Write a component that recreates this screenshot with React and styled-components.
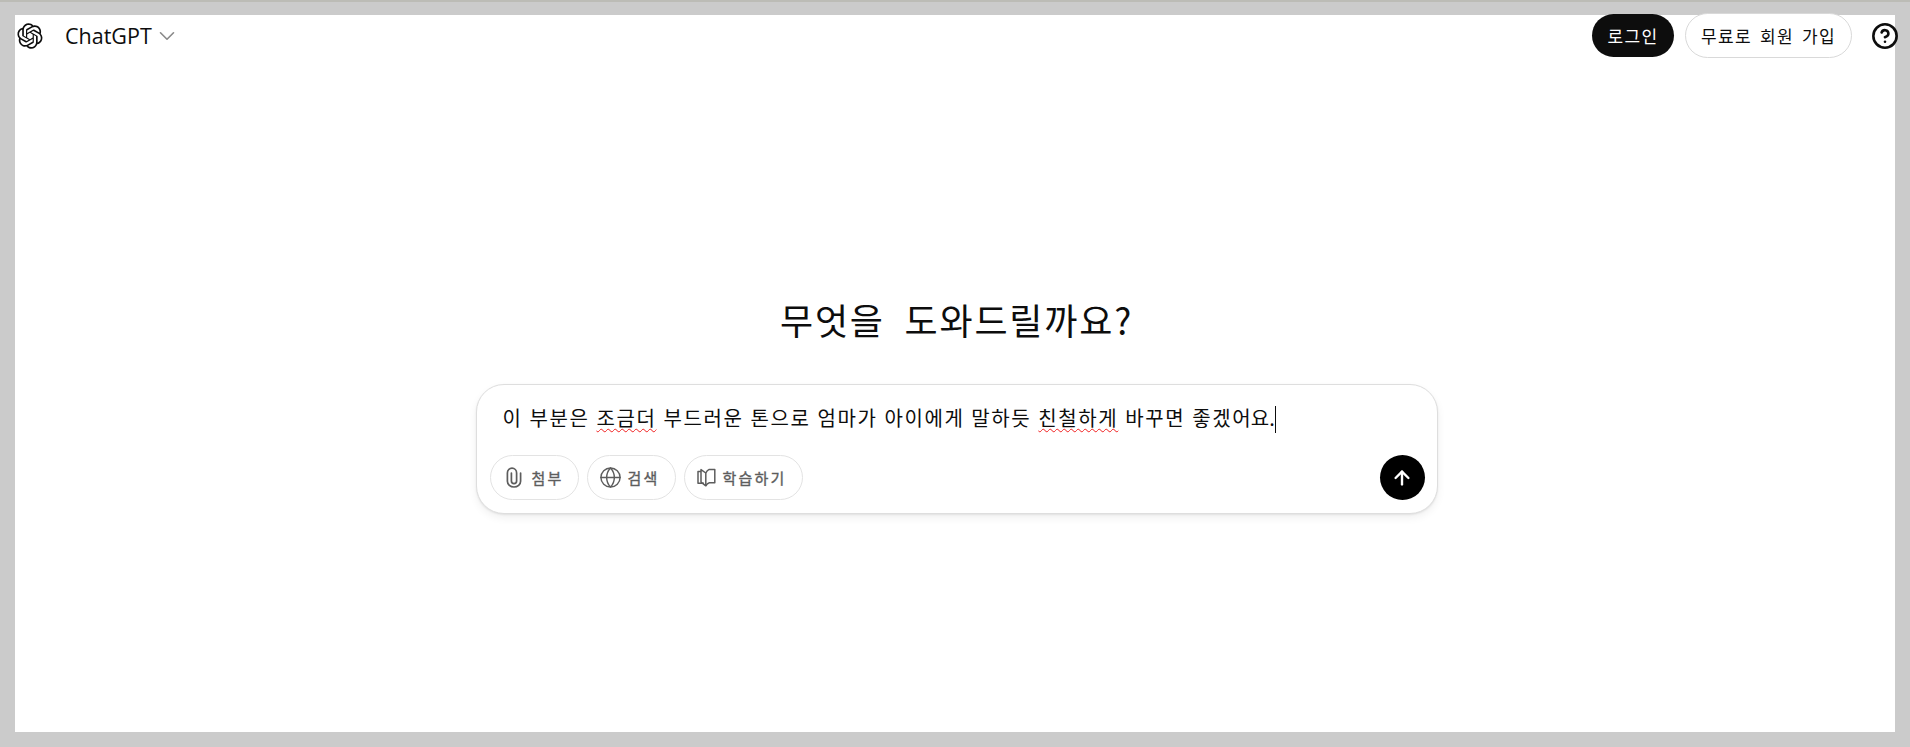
import React from "react";
import styled, { createGlobalStyle } from "styled-components";
import { ChevronDown, CircleHelp, Globe, ArrowUp } from "lucide-react";

const FONT = `"Noto Sans CJK KR", "Noto Sans", sans-serif`;

const GlobalStyle = createGlobalStyle`
  html, body {
    margin: 0;
    height: 100%;
    background: #cbcbcb;
  }
  #root {
    height: 100%;
  }
`;

const Page = styled.div`
  box-sizing: border-box;
  height: 747px;
  padding: 13px 15px 15px;
  border-top: 2px solid #bcbcb6;
  font-family: ${FONT};
  color: #0d0d0d;
`;

const Panel = styled.div`
  height: 100%;
  background: #fff;
  display: flex;
  flex-direction: column;
`;

const Header = styled.header`
  display: flex;
  align-items: center;
  height: 45px;
  margin: -2px -4px 0 2px;
`;

const ModelName = styled.span`
  margin-left: 22px;
  font-family: "Open Sans", sans-serif;
  font-size: 21.5px;
  color: #0d0d0d;
`;

const Chevron = styled(ChevronDown)`
  margin-left: 2px;
`;

const Actions = styled.div`
  margin-left: auto;
  display: flex;
  align-items: center;
`;

const AuthButton = styled.button`
  box-sizing: border-box;
  height: ${(p) => (p.$primary ? "43px" : "45px")};
  width: ${(p) => (p.$primary ? "82px" : "167px")};
  margin-right: ${(p) => (p.$primary ? "11px" : "19px")};
  padding: 0;
  border-radius: 23px;
  border: ${(p) => (p.$primary ? "none" : "1px solid #d9d9d9")};
  background: ${(p) => (p.$primary ? "#0d0d0d" : "#fff")};
  color: ${(p) => (p.$primary ? "#fff" : "#0d0d0d")};
  font-family: ${FONT};
  font-size: 17px;
  letter-spacing: 1.3px;
  word-spacing: 3px;
`;

const Main = styled.main`
  display: flex;
  flex-direction: column;
  align-items: center;
  padding: 239px 0 0 3px;
`;

const Title = styled.h1`
  margin: 0 0 43px;
  font-size: 36px;
  line-height: 44px;
  font-weight: 400;
  letter-spacing: 1.8px;
  word-spacing: 10px;
  color: #0d0d0d;
  white-space: nowrap;
`;

const Composer = styled.div`
  box-sizing: border-box;
  width: 962px;
  height: 130px;
  border: 1px solid #dedede;
  border-radius: 28px;
  background: #fff;
  box-shadow: 0 1px 2px rgba(0, 0, 0, 0.08), 0 4px 8px rgba(0, 0, 0, 0.06);
  padding: 16px 12px 13px 13px;
  display: flex;
  flex-direction: column;
  justify-content: space-between;
`;

const Prompt = styled.div`
  padding-left: 13px;
  font-size: 20px;
  line-height: 34px;
  letter-spacing: 1.6px;
  word-spacing: 0.9px;
  color: #0d0d0d;
  white-space: nowrap;
`;

const Misspelled = styled.span`
  text-decoration: underline wavy #f01f1f 1.3px;
  text-underline-offset: 2px;
`;

const Tight = styled.span`
  letter-spacing: 0;
`;

const Caret = styled.span`
  display: inline-block;
  width: 1px;
  height: 27px;
  background: #0d0d0d;
  vertical-align: -7px;
`;

const Toolbar = styled.div`
  display: flex;
  align-items: center;
  gap: 8px;
`;

const Chip = styled.button`
  box-sizing: border-box;
  height: 45px;
  width: ${(p) => p.$width}px;
  padding: 0 0 0 ${(p) => p.$pad}px;
  display: flex;
  align-items: center;
  gap: ${(p) => p.$gap}px;
  border: 1px solid #e3e3e3;
  border-radius: 23px;
  background: #fff;
  color: #5d5d5d;
  font-family: ${FONT};
  font-size: 15px;
  letter-spacing: 2.2px;
  -webkit-text-stroke: 0.35px #5d5d5d;
`;

const SendButton = styled.button`
  width: 45px;
  height: 45px;
  margin-left: auto;
  padding: 0;
  border: none;
  border-radius: 50%;
  background: #000;
  color: #fff;
  display: flex;
  align-items: center;
  justify-content: center;
`;

const Logo = () => (
  <svg width="26" height="26" viewBox="0 0 41 41" fill="#0d0d0d">
    <path d="M37.5324 16.8707C37.9808 15.5241 38.1363 14.0974 37.9886 12.6859C37.8409 11.2744 37.3934 9.91076 36.676 8.68622C35.6126 6.83404 33.9882 5.3676 32.0373 4.4985C30.0864 3.62941 27.9098 3.40259 25.8215 3.85078C24.8796 2.7893 23.7219 1.94125 22.4257 1.36341C21.1295 0.785575 19.7249 0.491269 18.3058 0.500197C16.1708 0.495044 14.0893 1.16803 12.3614 2.42214C10.6335 3.67624 9.34853 5.44666 8.6917 7.47815C7.30085 7.76286 5.98686 8.3414 4.8377 9.17505C3.68854 10.0087 2.73073 11.0782 2.02839 12.312C0.956464 14.1591 0.498905 16.2988 0.721698 18.4228C0.944492 20.5467 1.83612 22.5449 3.268 24.1293C2.81966 25.4759 2.66413 26.9026 2.81182 28.3141C2.95951 29.7256 3.40701 31.0892 4.12437 32.3138C5.18791 34.1659 6.8123 35.6322 8.76321 36.5013C10.7141 37.3704 12.8907 37.5973 14.9789 37.1492C15.9208 38.2107 17.0786 39.0587 18.3747 39.6366C19.6709 40.2144 21.0755 40.5087 22.4946 40.4998C24.6307 40.5054 26.7133 39.8321 28.4418 38.5772C30.1704 37.3223 31.4556 35.5506 32.1119 33.5179C33.5027 33.2332 34.8167 32.6547 35.9659 31.821C37.115 30.9874 38.0728 29.9178 38.7752 28.684C39.8458 26.8371 40.3023 24.6979 40.0789 22.5748C39.8556 20.4517 38.9639 18.4544 37.5324 16.8707ZM22.4978 37.8849C20.7443 37.8874 19.0459 37.2733 17.6994 36.1501C17.7601 36.117 17.8666 36.0586 17.936 36.0161L25.9004 31.4156C26.1003 31.3019 26.2663 31.137 26.3813 30.9378C26.4964 30.7386 26.5563 30.5124 26.5549 30.2825V19.0542L29.9213 20.998C29.9389 21.0068 29.9541 21.0198 29.9656 21.0359C29.977 21.052 29.9842 21.0707 29.9867 21.0902V30.3889C29.9842 32.375 29.1946 34.2791 27.7909 35.6841C26.3872 37.0892 24.4838 37.8806 22.4978 37.8849ZM6.39227 31.0064C5.51397 29.4888 5.19742 27.7107 5.49804 25.9832C5.55718 26.0187 5.66048 26.0818 5.73461 26.1244L13.699 30.7248C13.8975 30.8408 14.1233 30.902 14.3532 30.902C14.583 30.902 14.8088 30.8408 15.0073 30.7248L24.731 25.1103V28.9979C24.7321 29.0177 24.7283 29.0376 24.7199 29.0556C24.7115 29.0736 24.6988 29.0893 24.6829 29.1012L16.6317 33.7497C14.9096 34.7416 12.8643 35.0097 10.9447 34.4954C9.02506 33.9811 7.38785 32.7263 6.39227 31.0064ZM4.29707 13.6194C5.17156 12.0998 6.55279 10.9364 8.19885 10.3327C8.19885 10.4013 8.19491 10.5228 8.19491 10.6071V19.808C8.19351 20.0378 8.25334 20.2638 8.36823 20.4629C8.48312 20.6619 8.64893 20.8267 8.84863 20.9404L18.5723 26.5542L15.206 28.4979C15.1894 28.5089 15.1703 28.5155 15.1505 28.5173C15.1307 28.5191 15.1107 28.516 15.0924 28.5082L7.04046 23.8557C5.32135 22.8601 4.06716 21.2235 3.55289 19.3046C3.03862 17.3858 3.30624 15.3413 4.29707 13.6194ZM31.955 20.0556L22.2312 14.4411L25.5976 12.4981C25.6142 12.4872 25.6333 12.4805 25.6531 12.4787C25.6729 12.4769 25.6928 12.4801 25.7111 12.4879L33.7631 17.1364C34.9967 17.849 36.0017 18.8982 36.6606 20.1613C37.3194 21.4244 37.6047 22.849 37.4832 24.2684C37.3617 25.6878 36.8382 27.0432 35.9743 28.1759C35.1103 29.3086 33.9415 30.1717 32.6047 30.6641C32.6047 30.5947 32.6047 30.4733 32.6047 30.3889V21.188C32.6066 20.9586 32.5474 20.7328 32.4332 20.5338C32.319 20.3348 32.154 20.1698 31.955 20.0556ZM35.3055 15.0128C35.2464 14.9765 35.1431 14.9142 35.069 14.8717L27.1045 10.2712C26.906 10.1554 26.6803 10.0943 26.4504 10.0943C26.2206 10.0943 25.9948 10.1554 25.7963 10.2712L16.0726 15.8858V11.9982C16.0715 11.9783 16.0753 11.9585 16.0837 11.9405C16.0921 11.9225 16.1048 11.9068 16.1207 11.8949L24.1719 7.25025C25.4053 6.53903 26.8158 6.19376 28.2383 6.25482C29.6608 6.31589 31.0364 6.78077 32.2044 7.59508C33.3723 8.40939 34.2842 9.53945 34.8334 10.8531C35.3826 12.1667 35.5464 13.6095 35.3055 15.0128ZM14.2424 21.9419L10.8752 19.9981C10.8576 19.9893 10.8423 19.9763 10.8309 19.9602C10.8195 19.9441 10.8122 19.9254 10.8098 19.9058V10.6071C10.8107 9.18295 11.2173 7.78848 11.9819 6.58696C12.7466 5.38544 13.8377 4.42659 15.1275 3.82264C16.4173 3.21869 17.8524 2.99464 19.2649 3.1767C20.6775 3.35876 22.0089 3.93941 23.1034 4.85067C23.0427 4.88379 22.937 4.94215 22.8668 4.98473L14.9024 9.58517C14.7025 9.69878 14.5366 9.86356 14.4215 10.0626C14.3065 10.2616 14.2466 10.4877 14.2479 10.7175L14.2424 21.9419ZM16.071 17.9991L20.4018 15.4978L24.7325 17.9975V22.9985L20.4018 25.4983L16.071 22.9985V17.9991Z" />
  </svg>
);

const ClipIcon = () => (
  <svg width="16" height="21" viewBox="0 0 16 21" fill="none" stroke="#5d5d5d" strokeWidth="1.7" strokeLinecap="round">
    <path d="M14.6 6v8.2a6.6 5.8 0 0 1-13.2 0V6a4.6 4.9 0 0 1 9.2 0v8a2.6 2.6 0 0 1-5.2 0V6" />
  </svg>
);

const BookIcon = () => (
  <svg width="19" height="19" viewBox="0 0 19 19" fill="none" stroke="#5d5d5d" strokeWidth="1.5" strokeLinejoin="round">
    <path d="M8.8 5 4 1.6v12.6l4.8 3.6V5Z" />
    <path d="M4 3.6H1v11.6h6" />
    <path d="M8.8 5c.8-1.7 2-3 3.4-3.6h5.6v13.4h-5.4c-1.6.5-2.8 1.5-3.6 3" />
  </svg>
);

export default function App() {
  return (
    <>
      <GlobalStyle />
      <Page>
        <Panel>
          <Header>
            <Logo />
            <ModelName>ChatGPT</ModelName>
            <Chevron size={26} color="#8a8a8a" strokeWidth={1.5} />
            <Actions>
              <AuthButton $primary>로그인</AuthButton>
              <AuthButton>무료로 회원 가입</AuthButton>
              <CircleHelp size={28} color="#0d0d0d" strokeWidth={2.2} />
            </Actions>
          </Header>
          <Main>
            <Title>무엇을 도와드릴까요?</Title>
            <Composer>
              <Prompt>
                이 부분은 <Misspelled>조금더</Misspelled> 부드러운 톤으로 엄마가 아이에게 말하듯{" "}
                <Misspelled>친철하게</Misspelled> 바꾸면 좋겠<Tight>어요.</Tight>
                <Caret />
              </Prompt>
              <Toolbar>
                <Chip $width={89} $pad={15} $gap={10}>
                  <ClipIcon />
                  첨부
                </Chip>
                <Chip $width={89} $pad={11} $gap={6}>
                  <Globe size={23} strokeWidth={1.5} />
                  검색
                </Chip>
                <Chip $width={119} $pad={12} $gap={7}>
                  <BookIcon />
                  학습하기
                </Chip>
                <SendButton>
                  <ArrowUp size={22} strokeWidth={2.6} />
                </SendButton>
              </Toolbar>
            </Composer>
          </Main>
        </Panel>
      </Page>
    </>
  );
}
